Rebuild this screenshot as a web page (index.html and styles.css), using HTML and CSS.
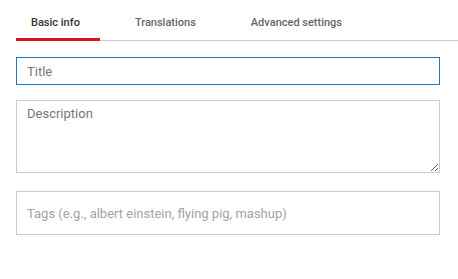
FILE: index.html
```html
<!DOCTYPE html>
<html>
    <head>
        <title>Video details</title>
        <link rel="stylesheet" href="styles.css">
    </head>
    <body>
        <div class="tabbar">
            <div class="tab active">Basic info</div>
            <div class="tab">Translations</div>
            <div class="tab">Advanced settings</div>
        </div>

        <div class="form">
            <input class="field title-field" type="text" placeholder="Title">
            <textarea class="field desc-field" placeholder="Description"></textarea>
            <input class="field tags-field" type="text" placeholder="Tags (e.g., albert einstein, flying pig, mashup)">
        </div>
    </body>
</html>
```

FILE: styles.css
```css
body {
    margin: 0;
    background: #fff;
    font-family: Roboto, "Liberation Sans", sans-serif;
}

.tabbar {
    display: flex;
    gap: 20px;
    margin-left: 16px;
    border-bottom: 1px solid #ccc;
}

.tab {
    padding: 16px 20px 8px 15px;
    line-height: 14px;
    font-size: 11px;
    font-weight: 500;
    color: #666;
    border-bottom: 3px solid transparent;
    margin-bottom: -1px;
}

.tab.active {
    color: #333;
    border-bottom-color: #d9151c;
}

.form {
    width: 424px;
    margin-left: 16px;
}

.field {
    display: block;
    box-sizing: border-box;
    width: 100%;
    margin: 0;
    border: 1px solid #ccc;
    border-radius: 0;
    outline: none;
    font-family: Roboto, "Liberation Sans", sans-serif;
    font-size: 13px;
    color: #333;
    padding: 0 10px;
}

.field::placeholder {
    color: #777;
}

.title-field {
    margin-top: 16px;
    height: 28px;
    border-color: #1f74c4;
}

.desc-field {
    margin-top: 15px;
    height: 73px;
    padding: 5px 10px;
    line-height: 16px;
    resize: vertical;
}

.tags-field {
    margin-top: 18px;
    height: 44px;
}

.tags-field::placeholder {
    color: #a3a3a3;
}
```
